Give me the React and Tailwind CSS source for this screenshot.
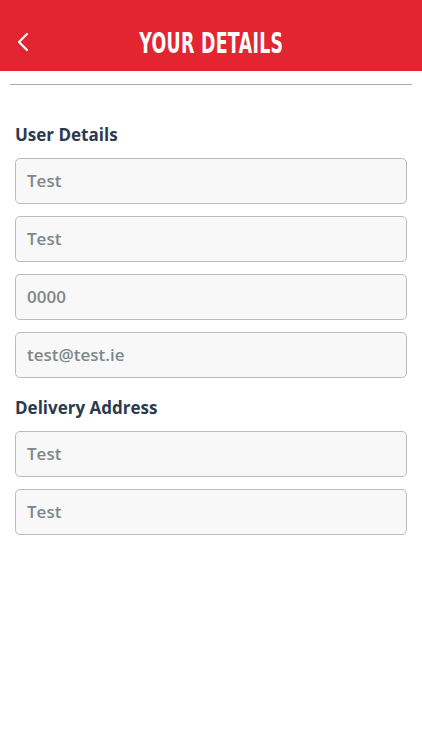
import { useState } from "react";

function Field({ value }) {
  return (
    <div className="h-[46px] rounded-[5px] border border-[#b9bcbf] bg-[#f8f8f8] px-[11px] flex items-center">
      <span className="text-[17px] font-semibold text-[#80878a]">{value}</span>
    </div>
  );
}

export default function App() {
  const [user] = useState(["Test", "Test", "0000", "test@test.ie"]);
  const [address] = useState(["Test", "Test"]);

  return (
    <div className="w-[422px] h-[750px] bg-white" style={{ fontFamily: "'Open Sans', 'Noto Sans', sans-serif" }}>
      {/* Header */}
      <header className="h-[71px] bg-[#e32431] flex items-center justify-center relative">
        <button className="absolute left-[14px] top-[31px] text-white">
          <svg width="18" height="22" viewBox="0 0 18 22" fill="none" stroke="currentColor" strokeWidth="2.2" strokeLinecap="round" strokeLinejoin="round">
            <path d="M13 3 L5 11 L13 19" />
          </svg>
        </button>
        <h1
          className="inline-block text-white text-[28px] font-bold leading-none tracking-[0.5px] mt-[16px] scale-x-[0.62]"
          style={{ fontFamily: "'DejaVu Sans', sans-serif" }}
        >
          YOUR DETAILS
        </h1>
      </header>

      <div className="px-[10px] pt-[13px]">
        <div className="h-px bg-[#a9abae]" />
      </div>

      <div className="px-[15px]">
        <h2 className="mt-[38px] text-[17px] font-bold text-[#2b3a4d] leading-[24px]">User Details</h2>
        <div className="mt-[11px] flex flex-col gap-[12px]">
          {user.map((v, i) => (
            <Field key={i} value={v} />
          ))}
        </div>
        <h2 className="mt-[18px] text-[17px] font-bold text-[#2b3a4d] leading-[24px]">Delivery Address</h2>
        <div className="mt-[11px] flex flex-col gap-[12px]">
          {address.map((v, i) => (
            <Field key={i} value={v} />
          ))}
        </div>
      </div>
    </div>
  );
}
